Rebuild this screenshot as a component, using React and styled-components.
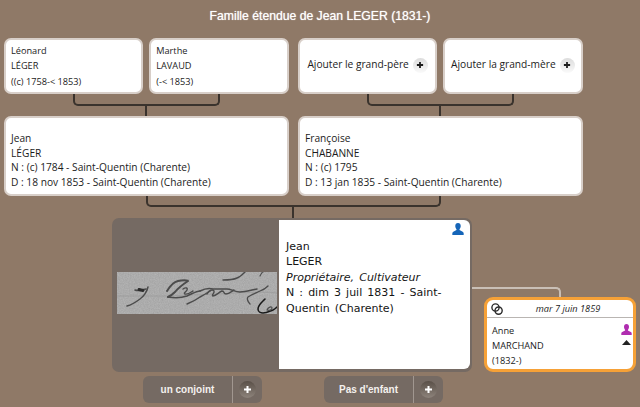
import styled, { createGlobalStyle } from "styled-components";

const GlobalStyle = createGlobalStyle`
  html, body {
    margin: 0;
    padding: 0;
    background: #8f7967;
  }
`;

const BORDER = "#3a332d";

const Page = styled.div`
  width: 640px;
  height: 407px;
  overflow: hidden;
  background: #8f7967;
  font-family: "Open Sans", "Liberation Sans", sans-serif;
  color: #1c1c1c;
`;

const Title = styled.h1`
  margin: 0;
  height: 38px;
  padding-top: 9px;
  box-sizing: border-box;
  font-family: "Liberation Sans", Arial, sans-serif;
  font-size: 12.2px;
  line-height: 14px;
  font-weight: normal;
  text-align: center;
  color: #fff;
  text-shadow: 0 0 1px rgba(255, 255, 255, 0.8);
`;

const Couples = styled.div`
  display: flex;
  gap: 9.5px;
  padding-left: 4px;
`;

const Couple = styled.div`
  width: 284.5px;
  display: flex;
  flex-direction: column;
  align-items: center;
`;

const Parents = styled.div`
  display: flex;
  gap: 6px;
  width: 100%;
`;

const Card = styled.div`
  box-sizing: border-box;
  background: #fff;
  border: 2px solid #d8cfc9;
  border-radius: 7px;
`;

const SmallCard = styled(Card)`
  width: 139.25px;
  height: 56px;
  padding: 3px 5px;
  font-size: 9.2px;
  line-height: 15.3px;
`;

const AddCard = styled(SmallCard)`
  display: flex;
  align-items: center;
  justify-content: center;
  gap: 4px;
  padding: 0 0 2px;
  font-size: 10.2px;
`;

const Child = styled(Card)`
  width: 100%;
  height: 80px;
  padding: 13px 5px 0 5px;
  line-height: 14.5px;
  font-size: 10.2px;
`;

const Line = styled.div`
  white-space: nowrap;
`;

const Bracket = styled.div`
  box-sizing: border-box;
  width: ${(p) => p.$width}px;
  height: ${(p) => p.$height}px;
  border: 2px solid ${BORDER};
  border-top: none;
  border-radius: 0 0 5px 5px;
`;

const Stem = styled.div`
  width: 2px;
  height: ${(p) => p.$height}px;
  background: ${BORDER};
`;

const SiblingLink = styled.div`
  width: 578px;
  margin-left: 4px;
  display: flex;
  flex-direction: column;
  align-items: center;
`;

const FocusRow = styled.div`
  display: flex;
  padding-left: 112px;
`;

const FocusColumn = styled.div`
  width: 360px;
  display: flex;
  flex-direction: column;
`;

const FocusCard = styled.div`
  box-sizing: border-box;
  height: 154px;
  display: flex;
  background: #756a63;
  border-radius: 7px;
  padding: 2px 2px 3px 5px;
`;

const Scan = styled.div`
  width: 162px;
  display: flex;
  align-items: center;
  padding-bottom: 3px;
`;

const FocusText = styled.div`
  position: relative;
  flex: 1;
  background: #fff;
  border-radius: 0 6px 6px 0;
  padding: 19px 8px 0 7px;
  font-family: "DejaVu Sans", sans-serif;
  font-size: 11px;
  line-height: 15.4px;
  word-spacing: 1.6px;
  color: #151515;
`;

const Job = styled.div`
  font-style: italic;
`;

const CornerIcon = styled.span`
  position: absolute;
  top: 3px;
  right: 6px;
  line-height: 0;
`;

const Actions = styled.div`
  display: flex;
  justify-content: space-between;
  padding: 4px 29px 0 31px;
`;

const Action = styled.div`
  width: 119px;
  height: 27px;
  display: flex;
  align-items: center;
  background: #756a63;
  border-radius: 6px;
  color: #f4f1ee;
  font-family: "Liberation Sans", Arial, sans-serif;
  font-size: 10px;
  font-weight: bold;
`;

const ActionLabel = styled.div`
  width: 89px;
  height: 100%;
  display: flex;
  align-items: center;
  justify-content: center;
  border-right: 1px solid #a19790;
`;

const ActionPlus = styled.div`
  flex: 1;
  display: flex;
  justify-content: center;
`;

const PlusBall = styled.div`
  width: ${(p) => p.$size}px;
  height: ${(p) => p.$size}px;
  flex: none;
  border-radius: 50%;
  display: flex;
  align-items: center;
  justify-content: center;
  background: ${(p) =>
    p.$dark
      ? "linear-gradient(#5a5048, #8d837b)"
      : "linear-gradient(#dcdcdc, #fafafa)"};
  color: ${(p) => (p.$dark ? "#fff" : "#1c1c1c")};
`;

const SpouseColumn = styled.div`
  display: flex;
  flex-direction: column;
  padding-top: 69px;
`;

const SpouseLink = styled.div`
  box-sizing: border-box;
  width: 89px;
  height: 10px;
  border-top: 2px solid #c9bfb6;
  border-right: 2px solid #c9bfb6;
  border-radius: 0 5px 0 0;
`;

const SpouseCard = styled.div`
  box-sizing: border-box;
  width: 152px;
  height: 75px;
  margin-left: 12px;
  background: #fff;
  border: 3px solid #f6a137;
  border-radius: 9px;
  font-size: 9.2px;
  overflow: hidden;
`;

const Wedding = styled.div`
  height: 17px;
  display: flex;
  align-items: center;
  padding-left: 4px;
  border-bottom: 1.5px solid #b9b5b2;
`;

const WeddingDate = styled.div`
  flex: 1;
  text-align: center;
  font-style: italic;
`;

const SpouseBody = styled.div`
  display: flex;
  justify-content: space-between;
  padding: 6px 1px 0 5px;
  line-height: 14.8px;
`;

const SpouseIcons = styled.div`
  display: flex;
  flex-direction: column;
  align-items: center;
  gap: 5px;
`;

const Plus = ({ size = 9, weight = 2 }) => (
  <svg width={size} height={size} viewBox="0 0 9 9">
    <path d="M4.5 1v7M1 4.5h7" stroke="currentColor" strokeWidth={weight} />
  </svg>
);

const Person = ({ color, size = 11 }) => (
  <svg width={size} height={size} viewBox="0 0 11 11">
    <path
      fill={color}
      d="M5.5 0C3.9 0 3 1.2 3 2.8c0 1.3.5 2.3 1.1 2.9v.8L1.2 8C.6 8.3.3 8.8.3 9.5V11h10.4V9.5c0-.7-.3-1.2-.9-1.5L6.9 6.5v-.8C7.5 5.1 8 4.1 8 2.8 8 1.2 7.1 0 5.5 0z"
    />
  </svg>
);

const Rings = () => (
  <svg width="12" height="12" viewBox="0 0 12 12" fill="none" stroke="#2b2b2b" strokeWidth="1.4">
    <circle cx="4.5" cy="4.5" r="3.6" />
    <circle cx="7.6" cy="7.6" r="3.6" />
  </svg>
);

const Handwriting = () => (
  <svg width="160" height="42" viewBox="0 0 160 42">
    <defs>
      <filter id="grain" x="0" y="0" width="100%" height="100%" colorInterpolationFilters="sRGB">
        <feTurbulence type="fractalNoise" baseFrequency="0.8" numOctaves="2" seed="4" />
        <feColorMatrix values="0 0 0 0 0.45  0 0 0 0 0.45  0 0 0 0 0.45  0 0 0 0.35 0" />
      </filter>
      <filter id="soft" colorInterpolationFilters="sRGB">
        <feGaussianBlur stdDeviation="0.55" />
      </filter>
    </defs>
    <rect width="160" height="42" fill="#b8b8b8" />
    <rect width="160" height="42" filter="url(#grain)" />
    <path d="M0 24 Q50 25 100 22 T160 21" stroke="#999" strokeWidth="0.7" fill="none" />
    <g filter="url(#soft)" fill="none" stroke="#4c4c4c" strokeLinecap="round">
      <path d="M18 18c4 1.5 8-.5 11-1" strokeWidth="1.6" />
      <path d="M22 17.500l4 1" strokeWidth="3" stroke="#2c2c2c" />
      <path d="M31 15c-1 5-5 10-8 12-4 3-9 6-13 7" strokeWidth="1.5" />
      <path d="M50 19c3-5 7-9 11-10 4-1 10-1 10 0-3 2-9 6-13 11-2 2-5 4-7 5" strokeWidth="2" />
      <path d="M51 25c6 1 13 1 19-1 5-2 9-5 13-5" strokeWidth="1.6" />
      <path d="M66 17c3-2 5-1 4 1-1 2-4 3-2 4 3 1 6-2 8-3" strokeWidth="1.4" />
      <path d="M70 32c5-2 9-4 13-7 4-2 7-4 10-6" strokeWidth="1.5" />
      <path d="M83 19c4-2 9-3 13-2 5 0 9 0 14 0 4 0 8 3 13 3 6 0 11-2 17-3" strokeWidth="1.5" />
      <path d="M90 22c2-4 6-5 7-3s-3 4-1 5c3 0 6-4 9-5 3 0 1 3 4 3 3 0 6-3 8-4" strokeWidth="1.4" />
      <path d="M106 8c5 0 10 0 14-2 3-1 6-4 8-6" strokeWidth="1.5" />
      <path d="M143 4c1-2 2-4 3-4" strokeWidth="1.2" />
      <path d="M133 32c-3-3-3-6-2-7 4-3 8-4 12-6 3-1 6-3 8-5" strokeWidth="1.3" />
      <path d="M148 27c-3 3-7 6-7 10 0 3 3 4 5 4 4 0 7-2 10-3 2-1 3-2 4-3" stroke="#1a1a1a" strokeWidth="1.6" />
      <path d="M150 38c1-3 5-4 5-2s-3 3-5 2" strokeWidth="1.2" />
    </g>
  </svg>
);

const grandparents = [
  {
    first: ["Léonard", "LÉGER", "((c) 1758-< 1853)"],
    second: ["Marthe", "LAVAUD", "(-< 1853)"],
    child: [
      "Jean",
      "LÉGER",
      "N : (c) 1784 - Saint-Quentin (Charente)",
      "D : 18 nov 1853 - Saint-Quentin (Charente)",
    ],
  },
  {
    addFirst: "Ajouter le grand-père",
    addSecond: "Ajouter la grand-mère",
    child: [
      "Françoise",
      "CHABANNE",
      "N : (c) 1795",
      "D : 13 jan 1835 - Saint-Quentin (Charente)",
    ],
  },
];

const Lines = ({ items }) => items.map((text) => <Line key={text}>{text}</Line>);

const Parent = ({ lines, add }) =>
  add ? (
    <AddCard>
      {add}
      <PlusBall $size={15}>
        <Plus size={8} />
      </PlusBall>
    </AddCard>
  ) : (
    <SmallCard>
      <Lines items={lines} />
    </SmallCard>
  );

const ActionButton = ({ label }) => (
  <Action>
    <ActionLabel>{label}</ActionLabel>
    <ActionPlus>
      <PlusBall $size={17} $dark>
        <Plus size={9} />
      </PlusBall>
    </ActionPlus>
  </Action>
);

export default function App() {
  return (
    <Page>
      <GlobalStyle />
      <Title>Famille étendue de Jean LEGER (1831-)</Title>
      <Couples>
        {grandparents.map((c) => (
          <Couple key={c.child[0]}>
            <Parents>
              <Parent lines={c.first} add={c.addFirst} />
              <Parent lines={c.second} add={c.addSecond} />
            </Parents>
            <Bracket $width={147} $height={12} />
            <Stem $height={10} />
            <Child>
              <Lines items={c.child} />
            </Child>
          </Couple>
        ))}
      </Couples>
      <SiblingLink>
        <Bracket $width={295} $height={11} />
        <Stem $height={11} />
      </SiblingLink>
      <FocusRow>
        <FocusColumn>
          <FocusCard>
            <Scan>
              <Handwriting />
            </Scan>
            <FocusText>
              <CornerIcon>
                <Person color="#1565b8" size={12} />
              </CornerIcon>
              Jean
              <br />
              LEGER
              <Job>Propriétaire, Cultivateur</Job>
              N : dim 3 juil 1831 - Saint-
              <br />
              Quentin (Charente)
            </FocusText>
          </FocusCard>
          <Actions>
            <ActionButton label="un conjoint" />
            <ActionButton label="Pas d'enfant" />
          </Actions>
        </FocusColumn>
        <SpouseColumn>
          <SpouseLink />
          <SpouseCard>
            <Wedding>
              <Rings />
              <WeddingDate>mar 7 juin 1859</WeddingDate>
            </Wedding>
            <SpouseBody>
              <div>
                <Line>Anne</Line>
                <Line>MARCHAND</Line>
                <Line>(1832-)</Line>
              </div>
              <SpouseIcons>
                <Person color="#b02db0" size={11} />
                <svg width="9" height="5" viewBox="0 0 9 5">
                  <path d="M4.5 0L9 5H0z" fill="#222" />
                </svg>
              </SpouseIcons>
            </SpouseBody>
          </SpouseCard>
        </SpouseColumn>
      </FocusRow>
    </Page>
  );
}
